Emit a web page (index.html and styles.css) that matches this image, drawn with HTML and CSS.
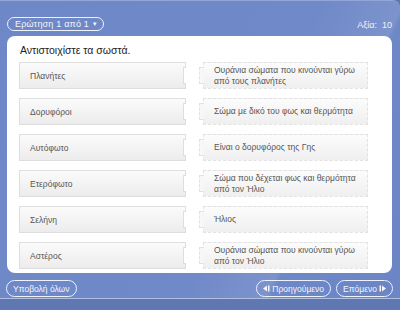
FILE: index.html
```html
<!DOCTYPE html>
<html>
<head>
<meta charset="utf-8">
<link rel="stylesheet" href="styles.css">
</head>
<body>
<div class="app">
  <div class="header">
    <span class="pill pill-q">Ερώτηση 1 από 1 <span class="caret">▾</span></span>
    <span class="worth">Αξία:&nbsp; 10</span>
  </div>
  <div class="panel">
    <div class="question">Αντιστοιχίστε τα σωστά.</div>
    <div class="rows">
      <div class="row"><div class="left">Πλανήτες</div><div class="right">Ουράνια σώματα που κινούνται γύρω<br>από τους πλανήτες</div></div>
      <div class="row"><div class="left">Δορυφόροι</div><div class="right">Σώμα με δικό του φως και θερμότητα</div></div>
      <div class="row"><div class="left">Αυτόφωτο</div><div class="right">Είναι ο δορυφόρος της Γης</div></div>
      <div class="row"><div class="left">Ετερόφωτο</div><div class="right">Σώμα που δέχεται φως και θερμότητα<br>από τον Ήλιο</div></div>
      <div class="row"><div class="left">Σελήνη</div><div class="right">Ήλιος</div></div>
      <div class="row"><div class="left">Αστέρος</div><div class="right">Ουράνια σώματα που κινούνται γύρω<br>από τον Ήλιο</div></div>
    </div>
  </div>
  <div class="footer">
    <span class="pill">Υποβολή όλων</span>
    <div class="nav">
      <span class="pill"><svg class="ico" width="7" height="7" viewBox="0 0 7 7"><path d="M0 3.5 L4 0.5 L4 6.5 Z" fill="#f4f6fc"/><rect x="5" y="0.5" width="1.5" height="6" fill="#f4f6fc"/></svg>Προηγούμενο</span>
      <span class="pill">Επόμενο<svg class="ico ico-r" width="7" height="7" viewBox="0 0 7 7"><rect x="0.5" y="0.5" width="1.5" height="6" fill="#f4f6fc"/><path d="M7 3.5 L3 0.5 L3 6.5 Z" fill="#f4f6fc"/></svg></span>
    </div>
  </div>
</div>
<div class="bottom"></div>
</body>
</html>
```
FILE: styles.css
```css
html, body { margin: 0; padding: 0; }
body {
  width: 400px;
  height: 310px;
  overflow: hidden;
  background: #6078b2;
  font-family: "Liberation Sans", Arial, sans-serif;
}
.app {
  height: 299px;
  background: linear-gradient(115deg, #6e87c6 0%, #7089c8 60%, #7c93cc 75%, #6e87c6 76%, #6c85c5 100%);
  border-top: 1px solid #93a6d8;
  border-bottom: 1px solid #b0bfe2;
  border-top-right-radius: 8px;
  display: flex;
  flex-direction: column;
  box-sizing: border-box;
}
.header {
  height: 35px;
  display: flex;
  align-items: flex-end;
  justify-content: space-between;
  padding: 0 8px 4px 7px;
  box-sizing: border-box;
}
.pill {
  display: inline-flex;
  align-items: center;
  height: 14px;
  border: 1px solid #eef2fb;
  border-radius: 9px;
  color: #f4f6fc;
  font-size: 9px;
  padding: 0 6px;
  white-space: nowrap;
}
.pill-q { height: 12px; margin-bottom: 1px; padding: 0 6px 0 7px; letter-spacing: 0.2px; }
.caret { font-size: 7px; margin-left: 4px; }
.worth {
  color: #eef2fb;
  font-size: 9px;
  margin-bottom: 2px;
}
.panel {
  height: 237px;
  margin: 0 8px 0 7px;
  background: #fff;
  border-radius: 8px;
  padding: 8px 0 0 12px;
  box-sizing: border-box;
}
.question {
  font-size: 10.5px;
  color: #222;
  margin-left: 1px;
  height: 18px;
}
.rows {
  display: flex;
  flex-direction: column;
  gap: 9px;
}
.row {
  display: flex;
  height: 27px;
  gap: 17px;
}
.left {
  position: relative;
  width: 167px;
  box-sizing: border-box;
  border: 1px solid #dedede;
  background: linear-gradient(#fbfbfb, #ececec);
  font-size: 8.5px;
  color: #555;
  display: flex;
  align-items: center;
  padding-left: 10px;
}
.left::after {
  content: "";
  position: absolute;
  right: -1px;
  top: 4px;
  bottom: 4px;
  width: 2px;
  background: #fff;
  border: 1px solid #dedede;
  border-right: none;
}
.right {
  position: relative;
  width: 165px;
  box-sizing: border-box;
  border: 1px dashed #e2e2e2;
  background: linear-gradient(#fcfcfc, #efefef);
  font-size: 8.5px;
  line-height: 11px;
  color: #555;
  display: flex;
  align-items: center;
  padding-left: 10px;
}
.right::before {
  content: "";
  position: absolute;
  left: -5px;
  top: 4px;
  bottom: 4px;
  width: 4px;
  background: #f7f7f7;
  border: 1px dashed #e2e2e2;
  border-right: none;
}
.footer {
  flex: 1;
  display: flex;
  justify-content: space-between;
  align-items: flex-start;
  padding: 7px 7px 0 6px;
}
.footer .pill { height: 15px; padding: 0 6px; font-size: 8.5px; }
.nav { display: flex; gap: 5px; }
.ico { margin-right: 2px; }
.ico-r { margin: 0 0 0 2px; }
.bottom { height: 10px; }
```
